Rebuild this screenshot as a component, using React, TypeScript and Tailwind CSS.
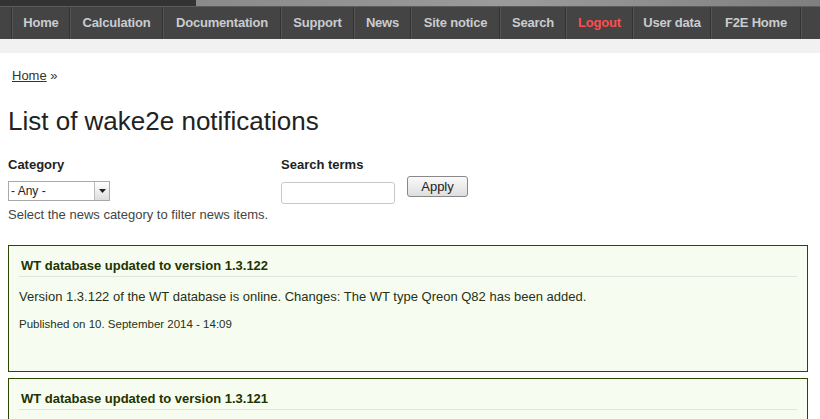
import React from "react";

const navItems = [
  { label: "Home", w: "w-[58px]" },
  { label: "Calculation", w: "w-[93px]" },
  { label: "Documentation", w: "w-[118px]" },
  { label: "Support", w: "w-[73px]" },
  { label: "News", w: "w-[57px]" },
  { label: "Site notice", w: "w-[89px]" },
  { label: "Search", w: "w-[66px]" },
  { label: "Logout", w: "w-[67px]", red: true },
  { label: "User data", w: "w-[78px]" },
  { label: "F2E Home", w: "w-[90px]" },
];

const news = [
  {
    title: "WT database updated to version 1.3.122",
    body: "Version 1.3.122 of the WT database is online. Changes: The WT type Qreon Q82 has been added.",
    date: "Published on 10. September 2014 - 14:09",
  },
  {
    title: "WT database updated to version 1.3.121",
    body: "Version 1.3.121 of the WT database is online.",
    date: "Published on 2. September 2014 - 10:12",
  },
];

export default function App() {
  return (
    <div className="min-h-screen bg-white text-[#333] font-['Liberation_Sans',Arial,sans-serif] overflow-hidden">
      {/* header image strip */}
      <div className="flex h-[6px]">
        <div className="w-[196px] bg-[#333]" />
        <div className="flex-1 bg-gradient-to-r from-[#8a8a88] via-[#9a9c9a] to-[#7e8080]" />
      </div>
      <div className="h-px bg-[#5c5c5c]" />

      {/* main nav */}
      <nav className="flex h-[32px] bg-[#444]">
        <div className="w-[12px] border-r border-[#333]" />
        {navItems.map((item) => (
          <a
            key={item.label}
            href="#"
            className={
              "flex items-center justify-center border-l border-[#555] border-r border-r-[#333] text-[13px] font-bold no-underline whitespace-nowrap tracking-[-0.2px] " +
              item.w +
              " " +
              (item.red ? "text-[#ff4d4d]" : "text-[#c9ccd0]")
            }
          >
            {item.label}
          </a>
        ))}
        <div className="flex-1 border-l border-[#555]" />
      </nav>
      <div className="h-[14px] bg-[#f1f1f1]" />

      <main className="px-[8px]">
        <div className="pt-[13px] pl-[4px] text-[13px]">
          <a href="#" className="underline text-[#333]">Home</a> »
        </div>

        <h1 className="mt-[19px] text-[26px] leading-[32px] text-[#222] font-normal">
          List of wake2e notifications
        </h1>

        {/* filters */}
        <div className="mt-[20px] flex">
          <div className="w-[273px]">
            <div className="text-[13px] font-bold leading-[16px] text-[#222]">Category</div>
            <div className="mt-[8px] flex h-[20px] w-[102px] border border-[#aaa] bg-white">
              <span className="flex-1 text-[12px] leading-[18px] pl-[2px] text-[#222]">- Any -</span>
              <span className="flex w-[15px] items-center justify-center border-l border-[#bbb] bg-gradient-to-b from-white to-[#ddd]">
                <svg width="7" height="4" viewBox="0 0 7 4">
                  <path d="M0 0h7L3.5 4z" fill="#222" />
                </svg>
              </span>
            </div>
            <div className="mt-[6px] text-[13px] leading-[16px] text-[#444]">
              Select the news category to filter news items.
            </div>
          </div>
          <div>
            <div className="text-[13px] font-bold leading-[16px] text-[#222]">Search terms</div>
            <div className="mt-[9px] h-[22px] w-[114px] rounded-[3px] border border-[#c8c8c8] bg-white" />
          </div>
          <div className="ml-[12px] pt-[17px]">
            <button className="h-[21px] w-[61px] rounded-[3px] border border-[#888] bg-gradient-to-b from-[#fafafa] to-[#dedede] text-[13px] leading-[18px] text-[#222]">
              Apply
            </button>
          </div>
        </div>

        {/* news items */}
        <div className="mt-[22px] flex flex-col gap-[6px] w-[800px]">
          {news.map((n) => (
            <div key={n.title} className="h-[127px] border border-[#2c4800] bg-[#f6fdf0] px-[10px] pt-[11px]">
              <h2 className="pl-[2px] pb-[2px] border-b border-[#e2e6de] text-[13px] leading-[17px] font-bold text-[#1f3300]">
                {n.title}
              </h2>
              <p className="mt-[11px] text-[13px] leading-[17px] text-[#283018]">{n.body}</p>
              <p className="mt-[12px] text-[11.5px] leading-[14px] text-[#283018]">{n.date}</p>
            </div>
          ))}
        </div>
      </main>
    </div>
  );
}
